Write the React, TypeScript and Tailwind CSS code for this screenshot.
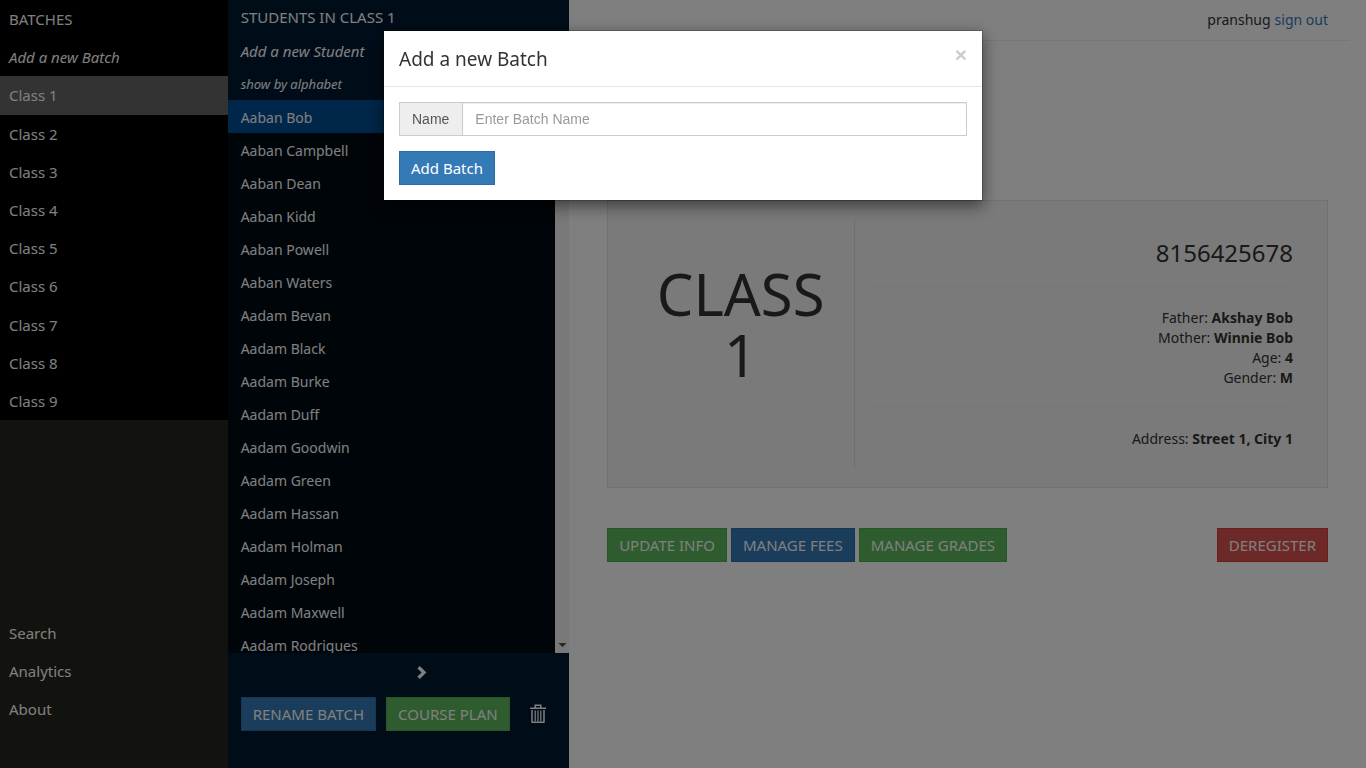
import React from "react";

const batches = ["Class 1", "Class 2", "Class 3", "Class 4", "Class 5", "Class 6", "Class 7", "Class 8", "Class 9"];

const students = [
  "Aaban Bob", "Aaban Campbell", "Aaban Dean", "Aaban Kidd", "Aaban Powell", "Aaban Waters",
  "Aadam Bevan", "Aadam Black", "Aadam Burke", "Aadam Duff", "Aadam Goodwin", "Aadam Green",
  "Aadam Hassan", "Aadam Holman", "Aadam Joseph", "Aadam Maxwell", "Aadam Rodrigues",
];

const tones = {
  blue: "border-[#2e6da4] bg-[#337ab7]",
  green: "border-[#4cae4c] bg-[#5cb85c]",
  red: "border-[#d43f3a] bg-[#d9534f]",
};

function Button({ tone, children }: { tone: keyof typeof tones; children: React.ReactNode }) {
  return (
    <button type="button" className={`h-[34px] whitespace-nowrap border px-[11px] text-[15px] text-white ${tones[tone]}`}>
      {children}
    </button>
  );
}

function BatchSidebar() {
  return (
    <nav className="flex w-1/6 shrink-0 flex-col bg-[#25261d] text-[15px] text-white">
      <div className="grid h-[420px] auto-rows-fr bg-black">
        <h2 className="flex items-center px-[9px]">BATCHES</h2>
        <a href="#add-batch" className="flex items-center px-[9px] italic">Add a new Batch</a>
        {batches.map((name, i) => (
          <a key={name} href="#batch" className={`flex items-center px-[9px] ${i === 0 ? "bg-[#666]" : ""}`}>
            {name}
          </a>
        ))}
      </div>
      <div className="mt-auto pb-10">
        {["Search", "Analytics", "About"].map((name) => (
          <a key={name} href="#page" className="flex h-[38px] items-center px-[9px]">{name}</a>
        ))}
      </div>
    </nav>
  );
}

function StudentPanel() {
  return (
    <section className="flex w-1/4 shrink-0 flex-col bg-[#001a33] text-white">
      <h2 className="flex h-[34px] items-center px-[13px] text-[15px]">STUDENTS IN CLASS 1</h2>
      <a href="#add-student" className="flex h-[33px] items-center px-[13px] text-[15px] italic">Add a new Student</a>
      <a href="#alphabet" className="flex h-[33px] items-center px-[13px] text-[13px] italic">show by alphabet</a>
      <div className="flex min-h-0 flex-1 bg-[#000a12]">
        <div className="min-w-0 flex-1 overflow-hidden">
          {students.map((name, i) => (
            <a key={name} href="#student" className={`flex h-[33px] items-center px-[13px] pt-0.5 ${i === 0 ? "bg-[#004d92]" : ""}`}>
              {name}
            </a>
          ))}
        </div>
        <div className="flex w-[14px] flex-col justify-end bg-[#f1f1f1] pb-1">
          <svg viewBox="0 0 14 8" className="h-2 w-[14px]" aria-hidden="true">
            <path d="M3.5 2h8L7.5 6.2z" fill="#505050" />
          </svg>
        </div>
      </div>
      <div className="flex h-[115px] flex-col">
        <div className="flex h-11 justify-center pt-3 pl-12">
          <button type="button" aria-label="Next" className="h-[14px] w-[10px]">
            <svg viewBox="0 0 10 14" className="h-[14px] w-[10px]" aria-hidden="true">
              <path d="M.4 3.4 2.8 1 9.4 7.5 2.8 14 .4 11.6 4.6 7.5z" fill="#fff" />
            </svg>
          </button>
        </div>
        <div className="flex items-center px-[13px]">
          <Button tone="blue">RENAME BATCH</Button>
          <div className="ml-[10px]"><Button tone="green">COURSE PLAN</Button></div>
          <button type="button" aria-label="Delete batch" className="ml-5">
            <svg viewBox="0 0 16 20" className="h-5 w-4" fill="none" stroke="#fff" aria-hidden="true">
              <path d="M0 4.3h16M5.2 4V1.3h5.6V4" strokeWidth="1.5" />
              <path d="M2 6v12.2h12V6" strokeWidth="1.5" strokeLinejoin="round" />
              <path d="M5.2 6.5v11M8 6.5v11M10.8 6.5v11" strokeWidth="1.2" />
            </svg>
          </button>
        </div>
      </div>
    </section>
  );
}

function StudentDetails() {
  return (
    <main className="flex min-w-0 flex-1 flex-col pr-4 text-[#333]">
      <header className="flex h-[41px] items-center justify-end gap-1 border-b border-[#eee] pr-[22px]">
        pranshug <a href="#signout" className="text-[#337ab7]">sign out</a>
      </header>
      <div className="mt-[159px] pr-[22px] pl-[38px]">
        <div className="flex border border-[#e3e3e3] bg-[#f5f5f5] py-[19px] pr-[34px] pl-[19px]">
          <h1 className="flex w-[228px] items-center justify-center border-r border-[#ddd] px-7 pb-10 text-center text-[58px] leading-[61px]">
            CLASS 1
          </h1>
          <div className="flex-1 pl-4 text-right">
            <p className="py-[19px] text-2xl leading-7">8156425678</p>
            <div className="border-y border-[#eee] pt-[21px] pb-[19px]">
              <p>Father: <b>Akshay Bob</b></p>
              <p>Mother: <b>Winnie Bob</b></p>
              <p>Age: <b>4</b></p>
              <p>Gender: <b>M</b></p>
            </div>
            <p className="pt-[21px] pb-[19px]">Address: <b>Street 1, City 1</b></p>
          </div>
        </div>
        <div className="mt-10 flex gap-1">
          <Button tone="green">UPDATE INFO</Button>
          <Button tone="blue">MANAGE FEES</Button>
          <Button tone="green">MANAGE GRADES</Button>
          <div className="ml-auto"><Button tone="red">DEREGISTER</Button></div>
        </div>
      </div>
    </main>
  );
}

function AddBatchDialog() {
  return (
    <div className="fixed inset-0 flex items-start justify-center bg-black/50 pt-[30px]">
      <div role="dialog" aria-modal="true" aria-labelledby="dialog-title" className="w-[600px] border border-black/20 bg-white bg-clip-padding text-[#333] shadow-[0_5px_15px_rgba(0,0,0,0.5)]">
        <div className="flex h-14 items-start justify-between border-b border-[#e5e5e5] px-[15px] pt-[15px]">
          <h2 id="dialog-title" className="text-[19px] leading-[26px]">Add a new Batch</h2>
          <button type="button" aria-label="Close" className="font-['Liberation_Sans',sans-serif] text-[21px] leading-[18px] font-bold text-[#ccc]">×</button>
        </div>
        <form className="p-[15px]">
          <div className="mb-[15px] flex h-[34px] border border-[#ccc] font-['Liberation_Sans',sans-serif]">
            <label htmlFor="batch-name" className="flex items-center border-r border-[#ccc] bg-[#eee] pr-[13px] pl-3 text-[#555]">Name</label>
            <input id="batch-name" type="text" placeholder="Enter Batch Name" className="min-w-0 flex-1 bg-white px-3 shadow-[inset_0_1px_1px_rgba(0,0,0,0.075)] outline-none placeholder:text-[#999]" />
          </div>
          <Button tone="blue">Add Batch</Button>
        </form>
      </div>
    </div>
  );
}

export default function App() {
  return (
    <div className="flex h-screen overflow-hidden bg-white font-['Noto_Sans',sans-serif] text-sm leading-5">
      <BatchSidebar />
      <StudentPanel />
      <StudentDetails />
      <AddBatchDialog />
    </div>
  );
}
